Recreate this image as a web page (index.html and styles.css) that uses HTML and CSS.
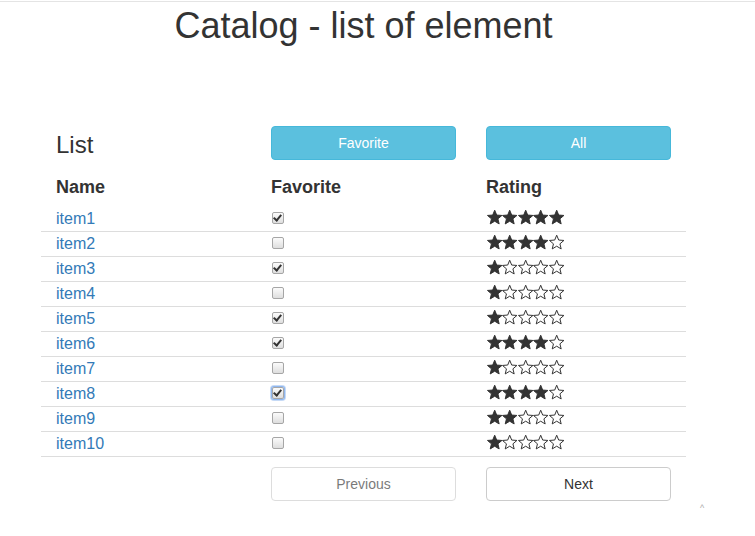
FILE: index.html
```html
<!DOCTYPE html>
<html>
<head>
<meta charset="utf-8">
<title>Catalog</title>
<link rel="stylesheet" href="styles.css">
</head>
<body>
<svg class="defs" width="0" height="0" aria-hidden="true">
  <defs>
    <symbol id="star" viewBox="0 0 15.4 15">
      <polygon points="7.7,0.2 9.7,5.05 14.93,5.45 10.93,8.85 12.17,13.95 7.7,11.2 3.23,13.95 4.47,8.85 0.47,5.45 5.7,5.05"/>
    </symbol>
  </defs>
</svg>
<div class="topline"></div>
<div class="wrap">
  <h1 class="title">Catalog - list of element</h1>

  <div class="row toolbar">
    <div class="cell"><h2 class="list-title">List</h2></div>
    <div class="cell"><button class="btn btn-info">Favorite</button></div>
    <div class="cell"><button class="btn btn-info">All</button></div>
  </div>

  <div class="row head">
    <div class="cell">Name</div>
    <div class="cell">Favorite</div>
    <div class="cell">Rating</div>
  </div>

  <div class="row item">
    <div class="cell"><a href="#">item1</a></div>
    <div class="cell"><span class="cb on"></span></div>
    <div class="cell"><span class="stars r5"><svg class="s"><use href="#star"/></svg><svg class="s"><use href="#star"/></svg><svg class="s"><use href="#star"/></svg><svg class="s"><use href="#star"/></svg><svg class="s"><use href="#star"/></svg></span></div>
  </div>
  <div class="row item">
    <div class="cell"><a href="#">item2</a></div>
    <div class="cell"><span class="cb"></span></div>
    <div class="cell"><span class="stars r4"><svg class="s"><use href="#star"/></svg><svg class="s"><use href="#star"/></svg><svg class="s"><use href="#star"/></svg><svg class="s"><use href="#star"/></svg><svg class="s"><use href="#star"/></svg></span></div>
  </div>
  <div class="row item">
    <div class="cell"><a href="#">item3</a></div>
    <div class="cell"><span class="cb on"></span></div>
    <div class="cell"><span class="stars r1"><svg class="s"><use href="#star"/></svg><svg class="s"><use href="#star"/></svg><svg class="s"><use href="#star"/></svg><svg class="s"><use href="#star"/></svg><svg class="s"><use href="#star"/></svg></span></div>
  </div>
  <div class="row item">
    <div class="cell"><a href="#">item4</a></div>
    <div class="cell"><span class="cb"></span></div>
    <div class="cell"><span class="stars r1"><svg class="s"><use href="#star"/></svg><svg class="s"><use href="#star"/></svg><svg class="s"><use href="#star"/></svg><svg class="s"><use href="#star"/></svg><svg class="s"><use href="#star"/></svg></span></div>
  </div>
  <div class="row item">
    <div class="cell"><a href="#">item5</a></div>
    <div class="cell"><span class="cb on"></span></div>
    <div class="cell"><span class="stars r1"><svg class="s"><use href="#star"/></svg><svg class="s"><use href="#star"/></svg><svg class="s"><use href="#star"/></svg><svg class="s"><use href="#star"/></svg><svg class="s"><use href="#star"/></svg></span></div>
  </div>
  <div class="row item">
    <div class="cell"><a href="#">item6</a></div>
    <div class="cell"><span class="cb on"></span></div>
    <div class="cell"><span class="stars r4"><svg class="s"><use href="#star"/></svg><svg class="s"><use href="#star"/></svg><svg class="s"><use href="#star"/></svg><svg class="s"><use href="#star"/></svg><svg class="s"><use href="#star"/></svg></span></div>
  </div>
  <div class="row item">
    <div class="cell"><a href="#">item7</a></div>
    <div class="cell"><span class="cb"></span></div>
    <div class="cell"><span class="stars r1"><svg class="s"><use href="#star"/></svg><svg class="s"><use href="#star"/></svg><svg class="s"><use href="#star"/></svg><svg class="s"><use href="#star"/></svg><svg class="s"><use href="#star"/></svg></span></div>
  </div>
  <div class="row item">
    <div class="cell"><a href="#">item8</a></div>
    <div class="cell"><span class="cb on focus"></span></div>
    <div class="cell"><span class="stars r4"><svg class="s"><use href="#star"/></svg><svg class="s"><use href="#star"/></svg><svg class="s"><use href="#star"/></svg><svg class="s"><use href="#star"/></svg><svg class="s"><use href="#star"/></svg></span></div>
  </div>
  <div class="row item">
    <div class="cell"><a href="#">item9</a></div>
    <div class="cell"><span class="cb"></span></div>
    <div class="cell"><span class="stars r2"><svg class="s"><use href="#star"/></svg><svg class="s"><use href="#star"/></svg><svg class="s"><use href="#star"/></svg><svg class="s"><use href="#star"/></svg><svg class="s"><use href="#star"/></svg></span></div>
  </div>
  <div class="row item">
    <div class="cell"><a href="#">item10</a></div>
    <div class="cell"><span class="cb"></span></div>
    <div class="cell"><span class="stars r1"><svg class="s"><use href="#star"/></svg><svg class="s"><use href="#star"/></svg><svg class="s"><use href="#star"/></svg><svg class="s"><use href="#star"/></svg><svg class="s"><use href="#star"/></svg></span></div>
  </div>

  <div class="row pager">
    <div class="cell"></div>
    <div class="cell"><button class="btn btn-default disabled">Previous</button></div>
    <div class="cell"><button class="btn btn-default">Next</button></div>
  </div>
</div>
<div class="totop">^</div>
</body>
</html>
```
FILE: styles.css
```css
html, body {
  margin: 0;
  padding: 0;
  background: #fff;
}
body {
  font-family: "Liberation Sans", Arial, Helvetica, sans-serif;
  color: #333;
  font-size: 14px;
  position: relative;
  min-height: 536px;
}
.defs {
  position: absolute;
  width: 0;
  height: 0;
  overflow: hidden;
}
.topline {
  height: 1px;
  margin-top: 1px;
  background: #e4e4e4;
}
.wrap {
  width: 645px;
  margin-left: 41px;
}
.title {
  margin: 4px 0 0 0;
  font-size: 36px;
  font-weight: 500;
  line-height: 40px;
  text-align: center;
  color: #333;
}
.row {
  display: grid;
  grid-template-columns: 215px 215px 215px;
}
.cell {
  padding: 0 15px;
  display: flex;
  align-items: center;
  min-width: 0;
}
.toolbar {
  margin-top: 80px;
}
.list-title {
  margin: 0;
  padding-top: 3px;
  font-size: 24px;
  font-weight: 500;
  line-height: 31px;
}
.btn {
  width: 185px;
  height: 34px;
  box-sizing: border-box;
  border-radius: 4px;
  border: 1px solid #ccc;
  font-family: "Liberation Sans", Arial, sans-serif;
  font-size: 14px;
  line-height: 20px;
  padding: 6px 12px;
  background: #fff;
  color: #333;
  cursor: pointer;
}
.btn-info {
  background: #5bc0de;
  border-color: #46b8da;
  color: #fff;
}
.btn.disabled {
  opacity: 0.65;
}
.head {
  padding-top: 15px;
  padding-bottom: 8px;
  font-size: 18px;
  font-weight: bold;
  line-height: 24px;
}
.item {
  border-bottom: 1px solid #dddddd;
  height: 25px;
  box-sizing: border-box;
  font-size: 16px;
  line-height: 24px;
}
.item a {
  color: #337ab7;
  text-decoration: none;
}
.cb {
  width: 10px;
  height: 10px;
  margin-left: 1px;
  margin-bottom: 3px;
  border: 1px solid #a6a6a6;
  border-radius: 2px;
  background: linear-gradient(#fbfbfb, #dedede);
  position: relative;
  display: inline-block;
}
.cb.on::after {
  content: "";
  position: absolute;
  left: 2px;
  top: 0px;
  width: 3px;
  height: 6px;
  border-right: 2px solid #333;
  border-bottom: 2px solid #333;
  transform: rotate(40deg);
}
.cb.focus {
  box-shadow: 0 0 0 1px #8fb6ee, 0 0 0 2px #c6daf6;
}
.stars {
  display: inline-flex;
  margin-bottom: 3px;
  margin-left: 1px;
}
.s {
  width: 15.4px;
  height: 15px;
  display: block;
  fill: #fff;
  stroke: #333;
  stroke-width: 1;
}
.r1 .s:nth-child(-n+1),
.r2 .s:nth-child(-n+2),
.r3 .s:nth-child(-n+3),
.r4 .s:nth-child(-n+4),
.r5 .s:nth-child(-n+5) {
  fill: #333;
}
.pager {
  margin-top: 10px;
}
.totop {
  position: absolute;
  left: 700px;
  top: 503px;
  font-size: 9px;
  color: #aaa;
}
```
